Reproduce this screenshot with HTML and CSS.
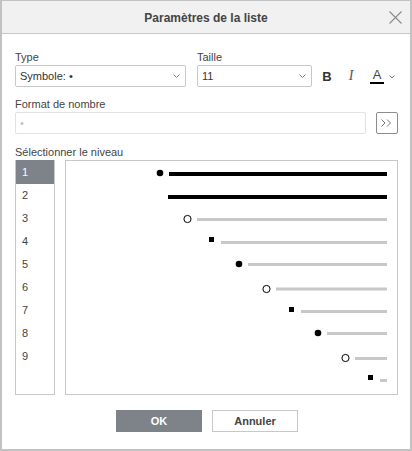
FILE: index.html
```html
<!DOCTYPE html>
<html lang="fr">
<head>
<meta charset="utf-8">
<title>Paramètres de la liste</title>
<link rel="stylesheet" href="styles.css">
</head>
<body>
<div class="dialog">
  <div class="header">
    <span class="spacer"></span>
    <div class="title">Paramètres de la liste</div>
    <span class="close">
      <svg width="13" height="13" viewBox="0 0 13 13"><path d="M0.5 0.5 L12.5 12.5 M12.5 0.5 L0.5 12.5" stroke="#8a8a8a" stroke-width="1.1" fill="none"/></svg>
    </span>
  </div>
  <div class="body">
    <div class="row-top">
      <div class="field type-field">
        <div class="lbl">Type</div>
        <div class="select"><span>Symbole: •</span>
          <svg class="chev" width="7" height="4" viewBox="0 0 7 4"><path d="M0.5 0.5 L3.5 3.5 L6.5 0.5" stroke="#777" fill="none"/></svg>
        </div>
      </div>
      <div class="field size-field">
        <div class="lbl">Taille</div>
        <div class="select"><span>11</span>
          <svg class="chev" width="7" height="4" viewBox="0 0 7 4"><path d="M0.5 0.5 L3.5 3.5 L6.5 0.5" stroke="#777" fill="none"/></svg>
        </div>
      </div>
      <div class="tools">
        <span class="tool tool-b">B</span>
        <span class="tool tool-i">I</span>
        <span class="tool tool-color">
          <span class="glyph-a">A<span class="bar"></span></span>
          <svg class="chev" width="6" height="4" viewBox="0 0 6 4"><path d="M0.5 0.5 L3 3 L5.5 0.5" stroke="#777" fill="none"/></svg>
        </span>
      </div>
    </div>

    <div class="field format-field">
      <div class="lbl">Format de nombre</div>
      <div class="format-row">
        <div class="input"><span class="ph">•</span></div>
        <span class="more">
          <svg width="12" height="8" viewBox="0 0 12 8"><path d="M0.5 0.5 L4 4 L0.5 7.5 M6 0.5 L9.5 4 L6 7.5" stroke="#777" fill="none"/></svg>
        </span>
      </div>
    </div>

    <div class="field level-field">
      <div class="lbl">Sélectionner le niveau</div>
      <div class="levels-row">
        <ul class="levels">
          <li class="sel">1</li>
          <li>2</li>
          <li>3</li>
          <li>4</li>
          <li>5</li>
          <li>6</li>
          <li>7</li>
          <li>8</li>
          <li>9</li>
        </ul>
        <div class="preview">
          <svg width="331" height="233" viewBox="0 0 331 233">
            <circle cx="94" cy="12" r="3.3" fill="#000"/>
            <rect x="103" y="11" width="218" height="4" fill="#000"/>
            <rect x="102" y="34" width="219" height="4" fill="#000"/>
            <circle cx="121.5" cy="58" r="3.6" fill="#fff" stroke="#000" stroke-width="1"/>
            <rect x="131" y="57" width="190" height="3" fill="#c8c8c8"/>
            <rect x="143" y="76" width="5" height="5" fill="#000"/>
            <rect x="155" y="80" width="166" height="3" fill="#c8c8c8"/>
            <circle cx="173" cy="103" r="3.3" fill="#000"/>
            <rect x="182" y="102" width="139" height="3" fill="#c8c8c8"/>
            <circle cx="200.5" cy="128" r="3.6" fill="#fff" stroke="#000" stroke-width="1"/>
            <rect x="210" y="126.5" width="111" height="3" fill="#c8c8c8"/>
            <rect x="223" y="146" width="5" height="5" fill="#000"/>
            <rect x="235" y="149" width="86" height="3" fill="#c8c8c8"/>
            <circle cx="252" cy="172" r="3.3" fill="#000"/>
            <rect x="261" y="171" width="60" height="3" fill="#c8c8c8"/>
            <circle cx="279.5" cy="197" r="3.6" fill="#fff" stroke="#000" stroke-width="1"/>
            <rect x="289" y="196" width="32" height="3" fill="#c8c8c8"/>
            <rect x="302" y="214" width="5" height="5" fill="#000"/>
            <rect x="314" y="218" width="7" height="3" fill="#c8c8c8"/>
          </svg>
        </div>
      </div>
    </div>

    <div class="actions">
      <span class="btn btn-ok">OK</span>
      <span class="btn btn-cancel">Annuler</span>
    </div>
  </div>
</div>
</body>
</html>
```
FILE: styles.css
```css
html, body {
  margin: 0;
  padding: 0;
  background: #fff;
}
body {
  font-family: "Liberation Sans", Arial, sans-serif;
  font-size: 11px;
  color: #444;
}
.dialog {
  width: 412px;
  height: 451px;
  box-sizing: border-box;
  border: solid #c2c2c2;
  border-width: 1px 2px 2px 2px;
  background: #fff;
}
.header {
  height: 32px;
  border-bottom: 1px solid #c8c8c8;
  background: #f1f1f1;
  display: grid;
  grid-template-columns: 1fr auto 1fr;
  align-items: center;
}
.title {
  font-weight: bold;
  font-size: 12px;
  color: #444;
  line-height: 14px;
  padding-top: 1px;
}
.close {
  justify-self: end;
  margin-right: 8px;
  margin-top: 1px;
  display: flex;
  width: 13px;
  height: 13px;
}
.body {
  padding: 16px 0 0 13px;
}
.lbl {
  line-height: 15px;
  height: 15px;
  color: #444;
  white-space: nowrap;
}
.row-top {
  display: flex;
  align-items: flex-end;
}
.select {
  box-sizing: border-box;
  height: 22px;
  border: 1px solid #c8c8c8;
  border-radius: 2px;
  display: flex;
  align-items: center;
  justify-content: space-between;
  padding: 0 5px 0 4px;
  color: #333;
}
.type-field .select {
  width: 171px;
}
.size-field {
  margin-left: 11px;
}
.size-field .select {
  width: 115px;
}
.tools {
  display: flex;
  align-items: center;
  height: 22px;
  margin-left: 4px;
}
.tool {
  display: flex;
  align-items: center;
  justify-content: center;
  height: 22px;
}
.tool-b {
  width: 22px;
  font-weight: bold;
  font-size: 13px;
  color: #333;
}
.tool-i {
  width: 22px;
  margin-left: 2px;
  font-family: "Liberation Serif", "Times New Roman", serif;
  font-style: italic;
  font-size: 14px;
  color: #555;
}
.tool-color {
  padding-left: 8px;
  gap: 5px;
}
.glyph-a {
  position: relative;
  width: 14px;
  text-align: center;
  font-size: 13px;
  line-height: 14px;
  color: #444;
  display: block;
  height: 16px;
}
.glyph-a .bar {
  position: absolute;
  left: 0;
  right: 0;
  bottom: 0;
  height: 2px;
  background: #000;
}
.tool-color .chev {
  margin-top: 1px;
}
.format-field {
  margin-top: 10px;
}
.format-row {
  display: flex;
  align-items: center;
  gap: 10px;
}
.input {
  box-sizing: border-box;
  width: 351px;
  height: 22px;
  border: 1px solid #e2e2e2;
  border-radius: 2px;
  padding-left: 4px;
  display: flex;
  align-items: center;
}
.ph {
  color: #c4c4c4;
  font-size: 11px;
}
.more {
  box-sizing: border-box;
  width: 22px;
  height: 22px;
  border: 1px solid #8c8c8c;
  border-radius: 2px;
  display: flex;
  align-items: center;
  justify-content: center;
}
.level-field {
  margin-top: 11px;
}
.levels-row {
  display: flex;
  gap: 10px;
  height: 235px;
}
.levels {
  list-style: none;
  margin: 0;
  padding: 0;
  box-sizing: border-box;
  width: 40px;
  height: 235px;
  border: 1px solid #c8c8c8;
  border-top: none;
}
.levels li {
  height: 23px;
  line-height: 23px;
  padding-left: 6px;
  color: #444;
}
.levels li.sel {
  background: #7e838a;
  color: #fff;
  height: 24px;
  line-height: 24px;
}
.preview {
  box-sizing: border-box;
  width: 333px;
  height: 235px;
  border: 1px solid #c8c8c8;
  display: flex;
}
.actions {
  display: flex;
  justify-content: center;
  gap: 10px;
  margin-top: 15px;
  padding-right: 11px;
}
.btn {
  box-sizing: border-box;
  width: 86px;
  height: 22px;
  display: flex;
  align-items: center;
  justify-content: center;
  font-weight: bold;
  font-size: 11px;
}
.btn-ok {
  background: #7e838a;
  color: #fff;
}
.btn-cancel {
  border: 1px solid #c8c8c8;
  color: #444;
  background: #fff;
}
```
